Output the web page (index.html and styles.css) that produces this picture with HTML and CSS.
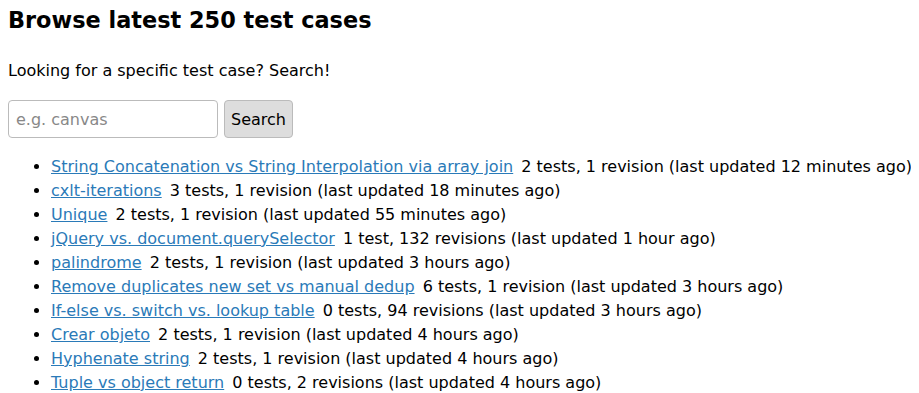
FILE: index.html
```html
<!DOCTYPE html>
<html lang="en">
<head>
  <meta charset="UTF-8" />
  <title>Browse latest 250 test cases</title>
  <link rel="stylesheet" href="styles.css">
</head>
<body>
  <h1>Browse latest 250 test cases</h1>
  <p>Looking for a specific test case? Search!</p>

  <form class="search">
    <input type="text" class="search-input" placeholder="e.g. canvas" />
    <button type="submit" class="search-btn">Search</button>
  </form>

  <ul class="cases">
    <li><a href="#">String Concatenation vs String Interpolation via array join</a> <span class="meta">2 tests, 1 revision (last updated 12 minutes ago)</span></li>
    <li><a href="#">cxlt-iterations</a> <span class="meta">3 tests, 1 revision (last updated 18 minutes ago)</span></li>
    <li><a href="#">Unique</a> <span class="meta">2 tests, 1 revision (last updated 55 minutes ago)</span></li>
    <li><a href="#">jQuery vs. document.querySelector</a> <span class="meta">1 test, 132 revisions (last updated 1 hour ago)</span></li>
    <li><a href="#">palindrome</a> <span class="meta">2 tests, 1 revision (last updated 3 hours ago)</span></li>
    <li><a href="#">Remove duplicates new set vs manual dedup</a> <span class="meta">6 tests, 1 revision (last updated 3 hours ago)</span></li>
    <li><a href="#">If-else vs. switch vs. lookup table</a> <span class="meta">0 tests, 94 revisions (last updated 3 hours ago)</span></li>
    <li><a href="#">Crear objeto</a> <span class="meta">2 tests, 1 revision (last updated 4 hours ago)</span></li>
    <li><a href="#">Hyphenate string</a> <span class="meta">2 tests, 1 revision (last updated 4 hours ago)</span></li>
    <li><a href="#">Tuple vs object return</a> <span class="meta">0 tests, 2 revisions (last updated 4 hours ago)</span></li>
  </ul>
</body>
</html>
```

FILE: styles.css
```css
body {
  margin: 8px;
  font-family: "DejaVu Sans", sans-serif;
  font-size: 16px;
  line-height: 24px;
  color: #000;
  background: #fff;
}
h1 {
  margin: 0 0 27px;
  font-size: 22.4px;
  line-height: 24px;
  font-weight: bold;
}
p {
  margin: 0 0 17px;
}
.search {
  display: flex;
  gap: 6px;
  margin: 0 0 17px;
}
.search-input {
  width: 210px;
  height: 38px;
  box-sizing: border-box;
  padding: 6px 7px;
  border: 1px solid #bbb;
  border-radius: 4px;
  font-family: inherit;
  font-size: 16px;
  color: #000;
}
.search-input::placeholder {
  color: #888;
}
.search-btn {
  height: 38px;
  padding: 0 6px;
  background: #ddd;
  border: 1px solid #bbb;
  border-radius: 4px;
  font-family: inherit;
  font-size: 16px;
  color: #000;
}
.cases {
  margin: 0;
  padding-left: 43px;
}
.cases li {
  white-space: nowrap;
}
.cases a {
  color: #2a7ab8;
}
.meta {
  margin-left: 3px;
}
```
